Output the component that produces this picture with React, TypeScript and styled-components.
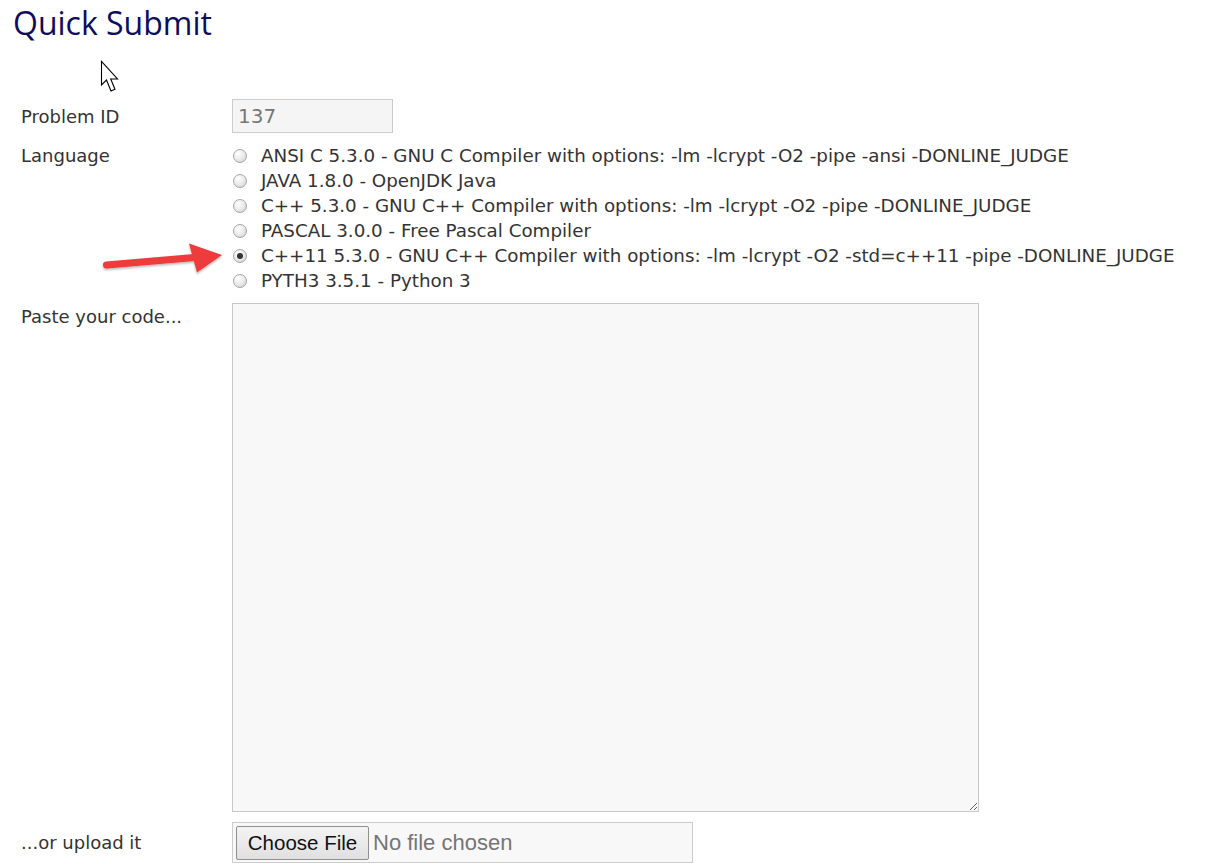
import React from "react";
import styled, { createGlobalStyle } from "styled-components";

const Global = createGlobalStyle`
  html, body { margin: 0; padding: 0; background: #fff; }
  body { font-family: "DejaVu Sans", sans-serif; color: #333; }
`;

const Page = styled.div`
  position: relative;
  width: 1212px;
  height: 864px;
  overflow: hidden;
  padding: 3px 0 0 13px;
  box-sizing: border-box;
`;

const Title = styled.h1`
  margin: 0;
  font-family: "Open Sans", sans-serif;
  font-weight: 400;
  font-size: 32px;
  line-height: 40px;
  color: #0d0d5c;
`;

const Form = styled.div`
  display: grid;
  grid-template-columns: 211px 1fr;
  row-gap: 10px;
  margin: 56px 0 0 8px;
`;

const Label = styled.div<{ $pad: number }>`
  font-size: 18px;
  line-height: 25px;
  padding-top: ${(p) => p.$pad}px;
  color: #333;
`;

const TextInput = styled.input`
  display: block;
  box-sizing: border-box;
  width: 161px;
  height: 34px;
  border: 1px solid #cccccc;
  background: #f5f5f5;
  color: #777;
  font-family: "DejaVu Sans", sans-serif;
  font-size: 20px;
  padding: 0 5px;
  outline: none;
`;

const RadioList = styled.div`
  display: flex;
  flex-direction: column;
`;

const RadioRow = styled.label`
  display: flex;
  align-items: center;
  height: 25px;
  font-size: 18.3px;
  color: #333;
  white-space: nowrap;
`;

const RadioDot = styled.span<{ $on: boolean }>`
  box-sizing: border-box;
  width: 14px;
  height: 14px;
  margin: 0 14px 0 1px;
  border-radius: 50%;
  border: 1px solid #a6a6a6;
  background: radial-gradient(circle at 35% 30%, #ffffff 0%, #e8e8e8 55%, #c9c9c9 100%);
  display: flex;
  align-items: center;
  justify-content: center;
  &::after {
    content: "";
    display: ${(p) => (p.$on ? "block" : "none")};
    width: 6px;
    height: 6px;
    border-radius: 50%;
    background: #333;
  }
`;

const CodeArea = styled.textarea`
  display: block;
  box-sizing: border-box;
  width: 747px;
  height: 509px;
  border: 1px solid #c8c8c8;
  background: #f8f8f8;
  margin: 0;
  outline: none;
  resize: both;
`;

const FileBox = styled.div`
  box-sizing: border-box;
  width: 461px;
  height: 41px;
  border: 1px solid #cccccc;
  background: #f8f8f8;
  display: flex;
  align-items: center;
  padding-left: 3px;
  gap: 4px;
`;

const FileButton = styled.button`
  box-sizing: border-box;
  height: 34px;
  width: 133px;
  border: 1px solid #8f8f8f;
  border-radius: 2px;
  background: linear-gradient(#f4f4f4, #e0e0e0);
  font-family: "Liberation Sans", Arial, sans-serif;
  font-size: 20.5px;
  color: #111;
  padding: 0;
`;

const FileText = styled.span`
  font-family: "Liberation Sans", Arial, sans-serif;
  font-size: 22px;
  color: #757575;
`;

const Overlay = styled.svg`
  position: absolute;
  pointer-events: none;
`;

const languages = [
  "ANSI C 5.3.0 - GNU C Compiler with options: -lm -lcrypt -O2 -pipe -ansi -DONLINE_JUDGE",
  "JAVA 1.8.0 - OpenJDK Java",
  "C++ 5.3.0 - GNU C++ Compiler with options: -lm -lcrypt -O2 -pipe -DONLINE_JUDGE",
  "PASCAL 3.0.0 - Free Pascal Compiler",
  "C++11 5.3.0 - GNU C++ Compiler with options: -lm -lcrypt -O2 -std=c++11 -pipe -DONLINE_JUDGE",
  "PYTH3 3.5.1 - Python 3",
];

export default function App() {
  return (
    <Page>
      <Global />
      <Title>Quick Submit</Title>
      <Form>
        <Label $pad={5}>Problem ID</Label>
        <div>
          <TextInput defaultValue="137" readOnly />
        </div>
        <Label $pad={0}>Language</Label>
        <RadioList>
          {languages.map((l, i) => (
            <RadioRow key={l}>
              <RadioDot $on={i === 4} />
              {l}
            </RadioRow>
          ))}
        </RadioList>
        <Label $pad={1}>Paste your code...</Label>
        <div>
          <CodeArea />
        </div>
        <Label $pad={8}>...or upload it</Label>
        <div>
          <FileBox>
            <FileButton>Choose File</FileButton>
            <FileText>No file chosen</FileText>
          </FileBox>
        </div>
      </Form>
      <Overlay style={{ left: 98, top: 60 }} width={24} height={34} viewBox="0 0 24 34">
        <path
          d="M3.5 1.5 L3.5 25 L8.5 20 L13 31 L17 29.3 L12.7 19 L19.5 19 Z"
          fill="#fff"
          stroke="#000"
          strokeWidth="1.1"
          strokeLinejoin="miter"
        />
      </Overlay>
      <Overlay style={{ left: 98, top: 238 }} width={132} height={40} viewBox="98 238 132 40">
        <defs>
          <filter id="sh" x="-10%" y="-30%" width="130%" height="170%">
            <feDropShadow dx="0" dy="1.5" stdDeviation="1.2" floodColor="#000" floodOpacity="0.3" />
          </filter>
        </defs>
        <g filter="url(#sh)" fill="#ee3b3b">
          <path d="M106 261.5 L194 254 L195 261 L107 268.5 A3.5 3.5 0 0 1 106 261.5 Z" />
          <path d="M189 243.5 L222 255 L197 272.5 Z" />
        </g>
      </Overlay>
    </Page>
  );
}
